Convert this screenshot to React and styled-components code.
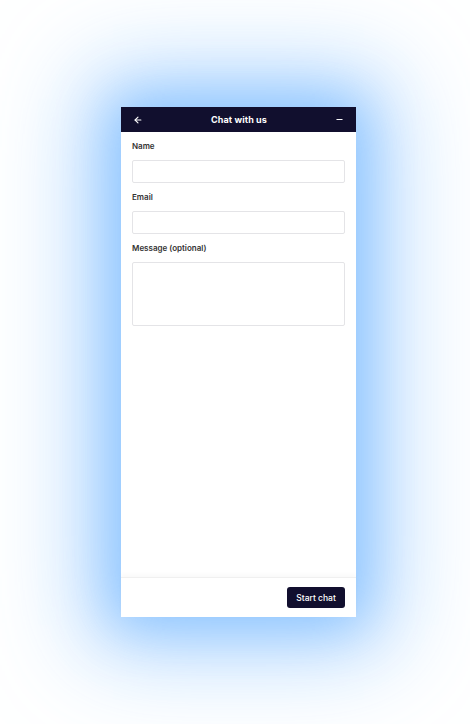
import React from "react";
import styled, { createGlobalStyle } from "styled-components";
import { ArrowLeft, Minus } from "lucide-react";

const GlobalStyle = createGlobalStyle`
  body {
    margin: 0;
    background: #ffffff;
    font-family: Inter, "Noto Sans", sans-serif;
  }
`;

function App() {
  return (
    <>
      <GlobalStyle />
      <Stage>
        <Widget>
          <Header>
            <IconButton aria-label="Back">
              <ArrowLeft size={10} strokeWidth={2.6} />
            </IconButton>
            <Title>Chat with us</Title>
            <IconButton aria-label="Minimize">
              <Minus size={9} strokeWidth={2.6} />
            </IconButton>
          </Header>
          <Form>
            <Label>Name</Label>
            <Input type="text" />
            <Label>Email</Label>
            <Input type="email" />
            <Label>Message (optional)</Label>
            <TextArea />
          </Form>
          <Footer>
            <Button>Start chat</Button>
          </Footer>
        </Widget>
      </Stage>
    </>
  );
}

const Stage = styled.div`
  height: 724px;
  display: flex;
  align-items: center;
  justify-content: center;
  padding-left: 7px;
  box-sizing: border-box;
  overflow: hidden;
`;

const Widget = styled.div`
  width: 235px;
  height: 510px;
  background: #ffffff;
  display: flex;
  flex-direction: column;
  box-shadow: 0 0 50px 8px rgba(125, 188, 255, 0.75),
    0 0 100px 30px rgba(140, 196, 255, 0.75);
`;

const Header = styled.div`
  height: 25px;
  flex-shrink: 0;
  background: #110f2e;
  color: #ffffff;
  display: flex;
  align-items: center;
  justify-content: space-between;
  padding: 0 12px;
`;

const Title = styled.span`
  font-size: 9px;
  font-weight: 700;
  letter-spacing: 0.1px;
`;

const IconButton = styled.button`
  background: none;
  border: none;
  padding: 0;
  color: #ffffff;
  display: flex;
  align-items: center;
  cursor: pointer;
`;

const Form = styled.div`
  flex: 1;
  display: flex;
  flex-direction: column;
  gap: 9px;
  padding: 9px 11px;
`;

const Label = styled.label`
  font-size: 8px;
  line-height: 10px;
  font-weight: 600;
  color: #333333;
`;

const Input = styled.input`
  height: 23px;
  box-sizing: border-box;
  border: 1px solid #e4e4e7;
  border-radius: 2px;
  outline: none;
`;

const TextArea = styled.textarea`
  height: 64px;
  box-sizing: border-box;
  border: 1px solid #e4e4e7;
  border-radius: 2px;
  resize: none;
  outline: none;
`;

const Footer = styled.div`
  height: 40px;
  flex-shrink: 0;
  box-sizing: border-box;
  border-top: 1px solid #f0f0f0;
  box-shadow: 0 -3px 4px rgba(0, 0, 0, 0.025);
  display: flex;
  align-items: center;
  justify-content: flex-end;
  padding: 0 11px;
`;

const Button = styled.button`
  height: 21px;
  width: 58px;
  border: none;
  border-radius: 3px;
  background: #110f2e;
  color: #ffffff;
  font-family: Inter, "Noto Sans", sans-serif;
  font-size: 8.5px;
  font-weight: 500;
  padding: 0;
  cursor: pointer;
`;

export default App;
